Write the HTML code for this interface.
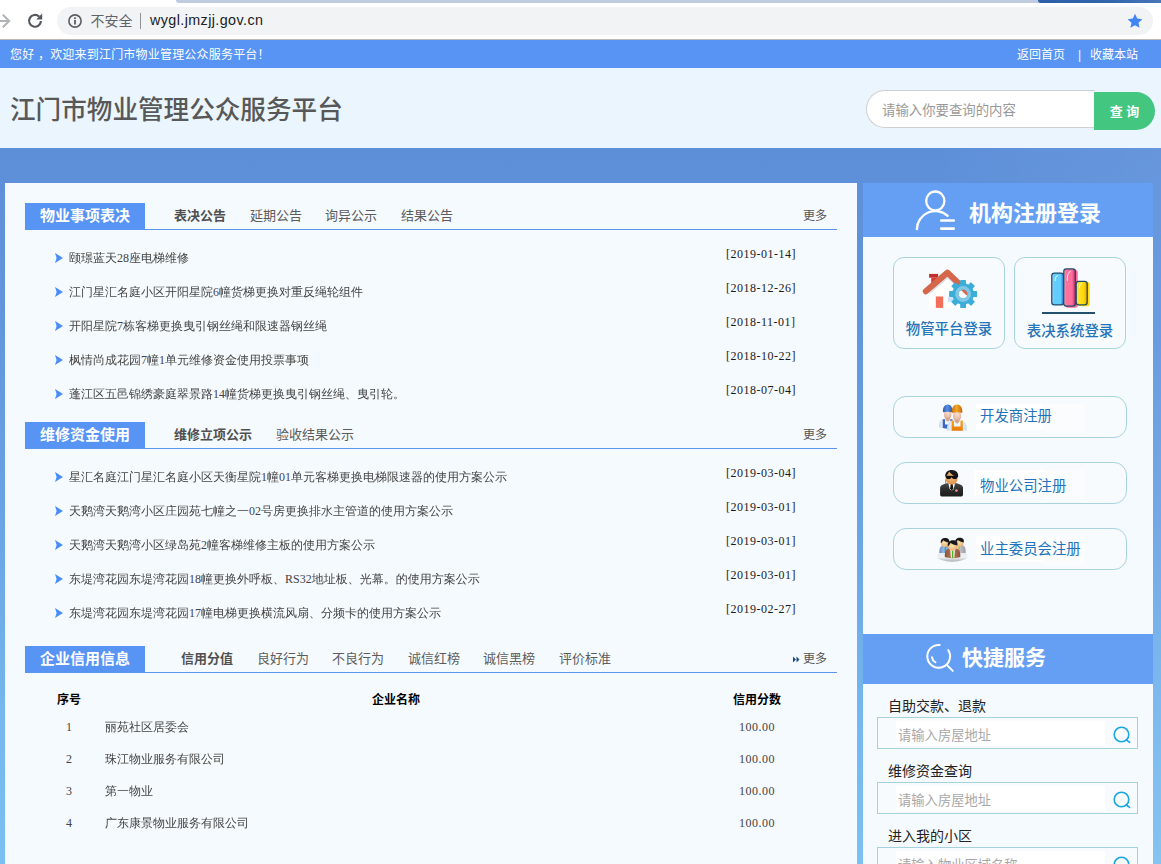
<!DOCTYPE html>
<html lang="zh-CN">
<head>
<meta charset="utf-8">
<title>江门市物业管理公众服务平台</title>
<style>
*{box-sizing:border-box;margin:0;padding:0}
html,body{width:1161px;height:864px;overflow:hidden}
body{position:relative;font-family:"Liberation Sans","Noto Sans CJK SC",sans-serif;font-size:12px;color:#333;
background:linear-gradient(90deg,rgba(255,255,255,0) 80%,rgba(255,255,255,.06) 100%),linear-gradient(180deg,#5d8fd9 148px,#6096dd 330px,#6aa4e4 520px,#75b7ee 720px,#7bc0f1 864px)}
.abs{position:absolute}
a{color:inherit;text-decoration:none}
ul{list-style:none}
.song{font-family:"Liberation Serif","WenQuanYi Zen Hei",sans-serif}

/* browser chrome */
#chrome{position:absolute;left:0;top:0;width:1161px;height:40px;background:#fff;border-bottom:1px solid #bdb8b4}
#chrome .tabl{position:absolute;left:176px;top:0;width:870px;height:2.5px;background:#bfcbdf;border-bottom-left-radius:4px}
#chrome .tabr{position:absolute;left:1038px;top:0;width:123px;height:3px;background:linear-gradient(90deg,#2d5fa8,#3365ad 60%,#4876ba);border-bottom-left-radius:4px}
#chrome .pill{position:absolute;left:57px;top:7px;width:1096px;height:28px;border-radius:14px;background:#f1f3f4}
#chrome .unsafe{position:absolute;left:90.600px;top:11px;font-size:14px;line-height:20px;color:#5f6368;letter-spacing:0}
#chrome .sep{position:absolute;left:140px;top:13px;width:1px;height:16px;background:#8f9499}
#chrome .url{position:absolute;left:150px;top:10px;font-size:14.3px;line-height:20px;color:#202124;letter-spacing:.42px}

/* top bar */
#topbar{position:absolute;left:0;top:40px;width:1161px;height:28px;background:#5794f4;color:#fff;font-size:12px;line-height:30px;white-space:nowrap}
#topbar .hello{position:absolute;left:10px;top:0;letter-spacing:.2px}
#topbar .links{position:absolute;top:0}

/* header */
#header{position:absolute;left:0;top:68px;width:1161px;height:80px;background:#eaf5fd}
#header h1{position:absolute;left:10px;top:24px;font-size:25.6px;line-height:36px;font-weight:500;color:#585858}
#search{position:absolute;left:866px;top:22px;width:289px;height:38px}
#search .inp{position:absolute;left:0;top:0;width:229px;height:38px;border:1px solid #cfcfcf;border-right:none;border-radius:19px 0 0 19px;background:#fff;color:#999;font-size:13.4px;line-height:40px;padding-left:15px}
#search .btn{position:absolute;left:228px;top:2px;width:61px;height:38px;border-radius:0 19px 19px 0;background:#42c680;color:#fff;font-size:13px;line-height:40px;text-align:center;font-weight:bold}

/* panels */
#left{position:absolute;left:5px;top:183px;width:852px;height:700px;background:#f5fafe}
#right{position:absolute;left:863px;top:183px;width:290px;height:700px;background:#f5fafe}

.sec{position:absolute;left:20px;width:812px;height:27px;border-bottom:1px solid #5a96f0}
.sec .tab{position:absolute;left:0;top:0;width:120px;height:26px;background:#5794f4;color:#fff;font-weight:bold;font-size:15px;line-height:26px;text-align:center}
.sec .sub{position:absolute;top:0;font-size:13px;line-height:26px;color:#5c5c5c;white-space:nowrap}
.sec .sub.on{font-weight:bold;color:#505050}
.sec .more{position:absolute;right:10px;top:0;font-size:12px;line-height:26px;color:#555}

.list li{position:absolute;left:0;width:852px;height:34px}
.list li i{position:absolute;left:50px;top:12px;width:8px;height:10px;background:#4a8ef5;clip-path:polygon(0 0,100% 50%,0 100%,20% 50%)}
.list li a{position:absolute;left:64px;top:8.500px;font-size:12px;line-height:16px;color:#444;white-space:nowrap}
.list li span{position:absolute;left:721px;top:5px;font-size:12px;line-height:16px;color:#1a1a1a;letter-spacing:.5px;white-space:nowrap}

.tbl .th{position:absolute;font-family:"Liberation Sans","Noto Sans CJK SC",sans-serif;font-size:12px;font-weight:bold;color:#000;line-height:16px;white-space:nowrap}
.tbl .td{position:absolute;font-size:12px;color:#444;line-height:16px;white-space:nowrap}

/* right */
.rhead{position:absolute;left:0;width:290px;background:#659ff3;color:#fff;font-weight:bold}
.card{position:absolute;width:112px;height:92px;border:1px solid #a9d4df;border-radius:11px;background:#f7fbfd}
.card b{position:absolute;left:0;width:110px;text-align:center;font-size:14.400px;line-height:20px;color:#2474ba;font-weight:500;white-space:nowrap}
.reg{position:absolute;left:30px;width:234px;height:42px;border:1px solid #a9d4df;border-radius:13px;background:#f7fbfd}
.reg b{position:absolute;left:82px;top:6.500px;width:67px;height:26.500px;padding-left:4px;background:#fff;font-size:14.400px;line-height:24px;color:#2273ba;font-weight:400;white-space:nowrap}
.reg u{position:absolute;left:149px;top:6.500px;width:42px;height:29px;background:#fafcfe}
.qlab{position:absolute;left:25px;font-size:14px;line-height:20px;color:#222;white-space:nowrap}
.qbox{position:absolute;left:14px;width:261px;height:32px;border:1px solid #a5d2df;background:#f7fbfd}
.qbox .in{position:absolute;left:18px;top:3px;width:209px;height:25px;background:#fff;color:#a8a8a8;font-size:13.300px;line-height:29px;padding-left:2px;white-space:nowrap;overflow:hidden}
.qbox svg{position:absolute;left:233.600px;top:7.400px}
</style>
</head>
<body>

<div id="chrome">
  <div class="tabl"></div><div class="tabr"></div>
  <svg class="abs" style="left:-8px;top:11px" width="20" height="20" viewBox="0 0 20 20"><path d="M2 10h15M10.800 3.700L17.200 10l-6.400 6.300" fill="none" stroke="#b1b4b8" stroke-width="2"/></svg>
  <svg class="abs" style="left:26px;top:11px" width="20" height="20" viewBox="0 0 20 20"><path d="M14.900 10a5.900 5.900 0 1 1-1.800-4.400" fill="none" stroke="#54585c" stroke-width="2.200"/><path d="M16.200 2.600v6h-6z" fill="#54585c"/></svg>
  <div class="pill"></div>
  <svg class="abs" style="left:67px;top:13px" width="16" height="16" viewBox="0 0 16 16"><circle cx="8" cy="8" r="6.100" fill="none" stroke="#5a5e63" stroke-width="1.600"/><rect x="7.100" y="7" width="1.800" height="4.500" fill="#5a5e63"/><rect x="7.100" y="4.300" width="1.800" height="1.800" fill="#5a5e63"/></svg>
  <div class="unsafe">不安全</div>
  <div class="sep"></div>
  <div class="url">wygl.jmzjj.gov.cn</div>
  <svg class="abs" style="left:1127px;top:13px" width="16" height="16" viewBox="0 0 16 16"><path d="M8 0.800l2.200 4.800 5.200 0.600-3.900 3.500 1.100 5.100L8 12.200l-4.600 2.600 1.100-5.100L0.600 6.200l5.200-0.600z" fill="#4285f4"/></svg>
</div>

<div id="topbar">
  <span class="hello">您好 ，欢迎来到江门市物业管理公众服务平台！</span>
  <span class="links" style="left:1017px">返回首页</span><span class="links" style="left:1078px">|</span><span class="links" style="left:1090px">收藏本站</span>
</div>

<div id="header">
  <h1>江门市物业管理公众服务平台</h1>
  <div id="search"><div class="inp">请输入你要查询的内容</div><div class="btn">查 询</div></div>
</div>

<div id="left">
  <!-- section 1 -->
  <div class="sec" style="top:20px">
    <div class="tab">物业事项表决</div>
    <span class="sub on" style="left:149px">表决公告</span>
    <span class="sub" style="left:225px">延期公告</span>
    <span class="sub" style="left:300px">询异公示</span>
    <span class="sub" style="left:376px">结果公告</span>
    <span class="more">更多</span>
  </div>
  <ul class="list song">
    <li style="top:58px"><i></i><a>颐璟蓝天28座电梯维修</a><span>[2019-01-14]</span></li>
    <li style="top:92px"><i></i><a>江门星汇名庭小区开阳星院6幢货梯更换对重反绳轮组件</a><span>[2018-12-26]</span></li>
    <li style="top:126px"><i></i><a>开阳星院7栋客梯更换曳引钢丝绳和限速器钢丝绳</a><span>[2018-11-01]</span></li>
    <li style="top:160px"><i></i><a>枫情尚成花园7幢1单元维修资金使用投票事项</a><span>[2018-10-22]</span></li>
    <li style="top:194px"><i></i><a>蓬江区五邑锦绣豪庭翠景路14幢货梯更换曳引钢丝绳、曳引轮。</a><span>[2018-07-04]</span></li>
  </ul>

  <!-- section 2 -->
  <div class="sec" style="top:239px">
    <div class="tab">维修资金使用</div>
    <span class="sub on" style="left:149px">维修立项公示</span>
    <span class="sub" style="left:251px">验收结果公示</span>
    <span class="more">更多</span>
  </div>
  <ul class="list song">
    <li style="top:277px"><i></i><a>星汇名庭江门星汇名庭小区天衡星院1幢01单元客梯更换电梯限速器的使用方案公示</a><span>[2019-03-04]</span></li>
    <li style="top:311px"><i></i><a>天鹅湾天鹅湾小区庄园苑七幢之一02号房更换排水主管道的使用方案公示</a><span>[2019-03-01]</span></li>
    <li style="top:345px"><i></i><a>天鹅湾天鹅湾小区绿岛苑2幢客梯维修主板的使用方案公示</a><span>[2019-03-01]</span></li>
    <li style="top:379px"><i></i><a>东堤湾花园东堤湾花园18幢更换外呼板、RS32地址板、光幕。的使用方案公示</a><span>[2019-03-01]</span></li>
    <li style="top:413px"><i></i><a>东堤湾花园东堤湾花园17幢电梯更换横流风扇、分频卡的使用方案公示</a><span>[2019-02-27]</span></li>
  </ul>

  <!-- section 3 -->
  <div class="sec" style="top:463px">
    <div class="tab">企业信用信息</div>
    <span class="sub on" style="left:156px">信用分值</span>
    <span class="sub" style="left:232px">良好行为</span>
    <span class="sub" style="left:307px">不良行为</span>
    <span class="sub" style="left:383px">诚信红榜</span>
    <span class="sub" style="left:458px">诚信黑榜</span>
    <span class="sub" style="left:534px">评价标准</span>
    <span class="more"><svg width="7" height="7" viewBox="0 0 7 7" style="margin-right:3px"><path d="M0 0.500l3 3-3 3zM3.500 0.500l3 3-3 3z" fill="#1b4f7c"/></svg>更多</span>
  </div>
  <div class="tbl song">
    <span class="th" style="left:52px;top:509px">序号</span>
    <span class="th" style="left:367px;top:509px">企业名称</span>
    <span class="th" style="left:728px;top:509px">信用分数</span>

    <span class="td" style="left:61px;top:536px">1</span><span class="td" style="left:100px;top:536px">丽苑社区居委会</span><span class="td" style="left:734px;top:536px;letter-spacing:.5px">100.00</span>
    <span class="td" style="left:61px;top:568px">2</span><span class="td" style="left:100px;top:568px">珠江物业服务有限公司</span><span class="td" style="left:734px;top:568px;letter-spacing:.5px">100.00</span>
    <span class="td" style="left:61px;top:600px">3</span><span class="td" style="left:100px;top:600px">第一物业</span><span class="td" style="left:734px;top:600px;letter-spacing:.5px">100.00</span>
    <span class="td" style="left:61px;top:632px">4</span><span class="td" style="left:100px;top:632px">广东康景物业服务有限公司</span><span class="td" style="left:734px;top:632px;letter-spacing:.5px">100.00</span>
  </div>
</div>

<div id="right">
  <div class="rhead" style="top:0;height:54px">
    <svg class="abs" style="left:42px;top:0" width="70" height="54" viewBox="0 0 70 54"><g fill="none" stroke="#fff" stroke-linecap="round"><ellipse cx="30.300" cy="18" rx="9.100" ry="9.500" stroke-width="2.300"/><path d="M11.900 46A18.400 18.400 0 0 1 42.700 32.800" stroke-width="2.400"/><path d="M36.200 37.500h12.600M36.200 45.600h12.600" stroke-width="2.600"/></g></svg>
    <span class="abs" style="left:106px;top:16px;font-size:22px;line-height:30px;white-space:nowrap">机构注册登录</span>
  </div>

  <div class="card" style="left:30px;top:74px"><svg class="abs" style="left:16px;top:2px" width="80" height="60" viewBox="0 0 80 60">
<path d="M19.100 13.900h9v3.800h-9z" fill="#c22f2b"/><path d="M21.200 17.700h6v7h-6z" fill="#d93a35"/>
<path d="M19.200 30.500L37.500 15.500 50.500 27v20.900H19.200z" fill="#fff"/>
<path d="M19.200 34.500L37.500 19 56 35v-4L37.500 14 19.200 29z" fill="#dde5ec"/>
<path d="M15.800 31.200L37.500 12.600 58 32.500" fill="none" stroke="#d5674a" stroke-width="6" stroke-linecap="round" stroke-linejoin="round"/>
<rect x="25.800" y="36.500" width="7.400" height="11.400" fill="#f46f5a"/>
<rect x="37.800" y="37.200" width="5.500" height="4.600" fill="#c5e3fa"/>
<g transform="translate(53.100 34)"><g fill="#3badd9"><rect x="-2.900" y="-14" width="5.800" height="7" rx=".6" transform="rotate(0)"/><rect x="-2.900" y="-14" width="5.800" height="7" rx=".6" transform="rotate(45)"/><rect x="-2.900" y="-14" width="5.800" height="7" rx=".6" transform="rotate(90)"/><rect x="-2.900" y="-14" width="5.800" height="7" rx=".6" transform="rotate(135)"/><rect x="-2.900" y="-14" width="5.800" height="7" rx=".6" transform="rotate(180)"/><rect x="-2.900" y="-14" width="5.800" height="7" rx=".6" transform="rotate(225)"/><rect x="-2.900" y="-14" width="5.800" height="7" rx=".6" transform="rotate(270)"/><rect x="-2.900" y="-14" width="5.800" height="7" rx=".6" transform="rotate(315)"/><path d="M0-10.800a10.800 10.800 0 1 0 0.010 0zM0-4.400a4.400 4.400 0 1 1-0.010 0z" fill-rule="evenodd"/></g><circle r="6.200" fill="none" stroke="#82c8e6" stroke-width="3.400"/></g>
</svg><b style="top:61px">物管平台登录</b></div>
  <div class="card" style="left:151px;top:74px"><svg class="abs" style="left:15px;top:2px" width="80" height="60" viewBox="0 0 80 60">
<defs><linearGradient id="gb" x1="0" x2="1"><stop offset="0" stop-color="#bfe9ff"/><stop offset=".18" stop-color="#62cdfc"/><stop offset=".75" stop-color="#62cdfc"/><stop offset=".9" stop-color="#3a97e8"/></linearGradient>
<linearGradient id="gp" x1="0" x2="1"><stop offset="0" stop-color="#ffc0d4"/><stop offset=".18" stop-color="#ff6f9c"/><stop offset=".7" stop-color="#ff6f9c"/><stop offset=".92" stop-color="#d93a72"/></linearGradient>
<linearGradient id="gy" x1="0" x2="1"><stop offset="0" stop-color="#ffe24d"/><stop offset=".7" stop-color="#ffd900"/><stop offset=".95" stop-color="#f3a300"/></linearGradient></defs>
<rect x="35.500" y="10" width="12.300" height="37.800" rx="2.500" fill="#ff6f9c"/>
<rect x="48" y="22" width="11.700" height="24.300" rx="2.500" fill="#ffdc0a"/>
<rect x="21.800" y="13.100" width="11.800" height="31.800" rx="2.600" fill="url(#gb)" stroke="#1f4d6b" stroke-width="1.300"/>
<rect x="46.200" y="21.400" width="11" height="23.500" rx="2.600" fill="url(#gy)" stroke="#1f4d6b" stroke-width="1.300"/>
<rect x="33.800" y="8.800" width="11.600" height="37.300" rx="2.600" fill="url(#gp)" stroke="#1f4d6b" stroke-width="1.300"/>
<path d="M25.200 20.500c0-3 .6-4.500 2.200-4.800M37.300 20.500c0-5 .8-8.500 2.900-9M49.500 27.500c0-2.500.6-3.800 2.200-4" fill="none" stroke="#fff" stroke-width=".9" stroke-linecap="round"/>
<path d="M12 53h53" stroke="#24506f" stroke-width="1.900"/>
</svg><b style="top:63px">表决系统登录</b></div>

  <div class="reg" style="top:213px"><svg class="abs" style="left:31px;top:-2px" width="60" height="45" viewBox="0 0 60 45">
<defs>
<radialGradient id="sk" cx=".5" cy=".3" r=".75"><stop offset="0" stop-color="#f8e0d2"/><stop offset=".7" stop-color="#e6b9a2"/><stop offset="1" stop-color="#c98f74"/></radialGradient>
<linearGradient id="capb" x1="0" x2="1"><stop offset="0" stop-color="#2f5cab"/><stop offset=".45" stop-color="#5a8fe2"/><stop offset="1" stop-color="#2b57a6"/></linearGradient>
<linearGradient id="capo" x1="0" x2="1"><stop offset="0" stop-color="#c96f10"/><stop offset=".45" stop-color="#f5a623"/><stop offset="1" stop-color="#c46a0e"/></linearGradient>
<linearGradient id="ovo" x1="0" y1="0" x2="0" y2="1"><stop offset="0" stop-color="#f7a21b"/><stop offset="1" stop-color="#e87a05"/></linearGradient>
<linearGradient id="sh" x1="0" x2="1"><stop offset="0" stop-color="#c7d6ea"/><stop offset=".25" stop-color="#eef5fd"/><stop offset=".75" stop-color="#f2f8ff"/><stop offset="1" stop-color="#c3d4ea"/></linearGradient>
</defs>
<path d="M14 32.500c-.3-5 1.200-7.800 4.800-8.700h7.500c3 .8 4.500 3.500 4.300 8.700-5 1.800-11 1.800-16.600 0z" fill="url(#sh)"/>
<path d="M17.700 24.300h2.300v8.800h-2.300zM25.300 24.300h2.200v5h-2.200zM18.500 29.500h8v4l-4 .3-4-.6z" fill="#3868c4"/>
<path d="M20.600 22h4.300v3.200l-2.100 1.600-2.200-1.600z" fill="#d9a78c"/>
<ellipse cx="22.700" cy="19.600" rx="3.700" ry="4.500" fill="url(#sk)"/>
<path d="M18 17.300c-.5-5 1.700-7.900 4.700-7.900s5.200 2.900 4.700 7.900c-3.100-.9-6.300-.9-9.400 0z" fill="url(#capb)"/>
<path d="M22 35.600c-.4-6 1.300-9.300 5.300-10.200h9.400c3.700.9 5.400 4.200 5 10.200-6 .6-13 .6-19.700 0z" fill="url(#sh)"/>
<path d="M26.600 25.500h2.300v6h6.600v-6h2.300v10.300h-11.200z" fill="url(#ovo)"/>
<path d="M29.600 23.500h4.900v3.300l-2.400 1.900-2.500-1.900z" fill="#d9a78c"/>
<ellipse cx="32.100" cy="21" rx="4.200" ry="5" fill="url(#sk)"/>
<path d="M26.900 17.900c-.6-5.500 2-8.500 5.200-8.500s5.800 3 5.200 8.500c-3.400-1-7-1-10.400 0z" fill="url(#capo)"/>
</svg><u></u><b>开发商注册</b></div>
  <div class="reg" style="top:279px"><svg class="abs" style="left:31px;top:-3px" width="60" height="45" viewBox="0 0 60 45">
<defs><radialGradient id="sk2" cx=".5" cy=".4" r=".7"><stop offset="0" stop-color="#f5bd7e"/><stop offset="1" stop-color="#d98e45"/></radialGradient>
<linearGradient id="suit" x1="0" y1="0" x2="0" y2="1"><stop offset="0" stop-color="#4a4a4a"/><stop offset=".5" stop-color="#2a2a2a"/><stop offset="1" stop-color="#1c1c1c"/></linearGradient></defs>
<path d="M15.100 34.500v-6.500c0-2.500 2-3.600 6.500-4.800h10c4.500 1.200 6.400 2.300 6.400 4.800v6.500c0 1.400-1 2.100-2.500 2.100h-18c-1.400 0-2.400-.7-2.400-2.100z" fill="url(#suit)"/>
<path d="M23.400 23.200h6.600l-1.300 6-2 1.200-2-1.200z" fill="#fff"/>
<path d="M25.700 24h2l.6 4.500-1.600 2.300-1.600-2.300z" fill="#151515"/>
<circle cx="31.400" cy="30.600" r="1.400" fill="#f08a8a"/>
<ellipse cx="26.600" cy="18" rx="6.100" ry="6.600" fill="url(#sk2)"/>
<path d="M20.300 17c-.6-4.500 2.500-7 6.500-7 4.500 0 7 3 6.300 7.200-3-.5-6.500-2.500-9-5.500-1 2-2.500 4-3.800 5.300z" fill="#1a1a1a"/>
<path d="M20.800 15.700h11.700c.3 2.200-.8 3.400-2.800 3.400-1.600 0-2.600-.8-3-2.200-.5 1.400-1.400 2.200-3 2.200-2 0-3.100-1.200-2.900-3.400z" fill="#111"/>
<path d="M20.600 19.500v4" stroke="#333" stroke-width=".5"/>
</svg><u></u><b style="line-height:33px;left:80px;width:69px;padding-left:6px">物业公司注册</b></div>
  <div class="reg" style="top:345px"><svg class="abs" style="left:31px;top:-3px" width="60" height="45" viewBox="0 0 60 45">
<defs><radialGradient id="sk3" cx=".45" cy=".45" r=".7"><stop offset="0" stop-color="#fbe0b0"/><stop offset="1" stop-color="#e0a765"/></radialGradient>
<linearGradient id="disc" x1="0" y1="0" x2="0" y2="1"><stop offset="0" stop-color="#dfe4e6"/><stop offset=".6" stop-color="#f1f4f5"/><stop offset="1" stop-color="#a9afb3"/></linearGradient>
<linearGradient id="bl" x1="0" x2="1"><stop offset="0" stop-color="#6d8fc4"/><stop offset=".5" stop-color="#a5bfe6"/><stop offset="1" stop-color="#6d8fc4"/></linearGradient>
<linearGradient id="gr" x1="0" x2="1"><stop offset="0" stop-color="#d9d9dd"/><stop offset="1" stop-color="#9c9ca2"/></linearGradient>
<linearGradient id="br" x1="0" x2="1"><stop offset="0" stop-color="#8e5138"/><stop offset=".5" stop-color="#b57a60"/><stop offset="1" stop-color="#8e5138"/></linearGradient></defs>
<ellipse cx="27.300" cy="30" rx="15.400" ry="5.800" fill="url(#disc)"/>
<path d="M14.300 27c-.3-4.500 1.300-7.300 4-8h4c2 .6 3 3 3 8z" fill="url(#bl)"/><path d="M19.600 20.300h1.500v6.700h-1.500z" fill="#1fa9c9"/>
<circle cx="20" cy="17" r="4" fill="url(#sk3)"/><path d="M15.900 17.300c-.7-3.500 1.300-5.300 4.300-5.300s4.700 1.700 3.900 4.600c-2.300-.2-4.800-1.300-5.800-2.300-.6 1-1.400 2.200-2.400 3z" fill="#1a1a1a"/>
<path d="M31 27c0-5 1-7.400 3-8h3.500c2.300.7 3.500 3.500 3.200 8z" fill="url(#gr)"/><path d="M33.500 20.300h1.500v6.700h-1.500z" fill="#d4b90f"/>
<circle cx="34.600" cy="16.600" r="4" fill="url(#sk3)"/><path d="M30.500 16.800c-.7-3.400 1.300-5 4.300-5s4.700 1.700 3.900 4.600c-2.300-.2-4.800-1.300-5.800-2.300-.6 1-1.400 2-2.400 2.700z" fill="#1a1a1a"/>
<path d="M19.800 31c-.3-5.500 1.400-8 4.300-8.500h7c3 .6 4.500 3.300 4.200 8.500-4 1.500-11 1.500-15.500 0z" fill="url(#br)"/>
<path d="M25.300 23.500h4.600l-.6 8.300h-3.400z" fill="#fff"/><path d="M26.800 24.500h1.600v7.500h-1.600z" fill="#4fb51c"/>
<circle cx="27.600" cy="20.300" r="4.600" fill="url(#sk3)"/><path d="M22.900 20.400c-.8-4 1.500-6.200 5-6.200s5.300 2 4.400 5.300c-2.700-.2-5.500-1.500-6.600-2.700-.7 1.200-1.600 2.600-2.800 3.600z" fill="#1a1a1a"/>
</svg><u></u><b style="line-height:26px">业主委员会注册</b></div>

  <div class="rhead" style="top:451px;height:50px">
    <svg class="abs" style="left:52px;top:0" width="60" height="50" viewBox="0 0 60 50"><g fill="none" stroke="#fff" stroke-width="2" stroke-linecap="round"><path d="M33.26 16.09A11.4 11.4 0 1 1 24.69 10.94"/><path d="M16.98 23.36A6.800 6.800 0 0 0 20.40 28.25"/><path d="M32 31.100l5.800 5.800"/></g></svg>
    <span class="abs" style="left:99px;top:9px;font-size:21px;line-height:30px;white-space:nowrap">快捷服务</span>
  </div>

  <span class="qlab" style="top:513px">自助交款、退款</span>
  <div class="qbox" style="top:534px"><div class="in">请输入房屋地址</div><svg width="20" height="20" viewBox="0 0 20 20"><circle cx="9.500" cy="9.500" r="7.300" fill="none" stroke="#19a7e3" stroke-width="1.600"/><path d="M14.500 15l3.200 2.300" stroke="#19a7e3" stroke-width="1.600" stroke-linecap="round"/></svg></div>
  <span class="qlab" style="top:578px">维修资金查询</span>
  <div class="qbox" style="top:599px"><div class="in">请输入房屋地址</div><svg width="20" height="20" viewBox="0 0 20 20"><circle cx="9.500" cy="9.500" r="7.300" fill="none" stroke="#19a7e3" stroke-width="1.600"/><path d="M14.500 15l3.200 2.300" stroke="#19a7e3" stroke-width="1.600" stroke-linecap="round"/></svg></div>
  <span class="qlab" style="top:643px">进入我的小区</span>
  <div class="qbox" style="top:664px"><div class="in">请输入物业区域名称</div><svg width="20" height="20" viewBox="0 0 20 20"><circle cx="9.500" cy="9.500" r="7.300" fill="none" stroke="#19a7e3" stroke-width="1.600"/><path d="M14.500 15l3.200 2.300" stroke="#19a7e3" stroke-width="1.600" stroke-linecap="round"/></svg></div>
</div>

</body>
</html>
